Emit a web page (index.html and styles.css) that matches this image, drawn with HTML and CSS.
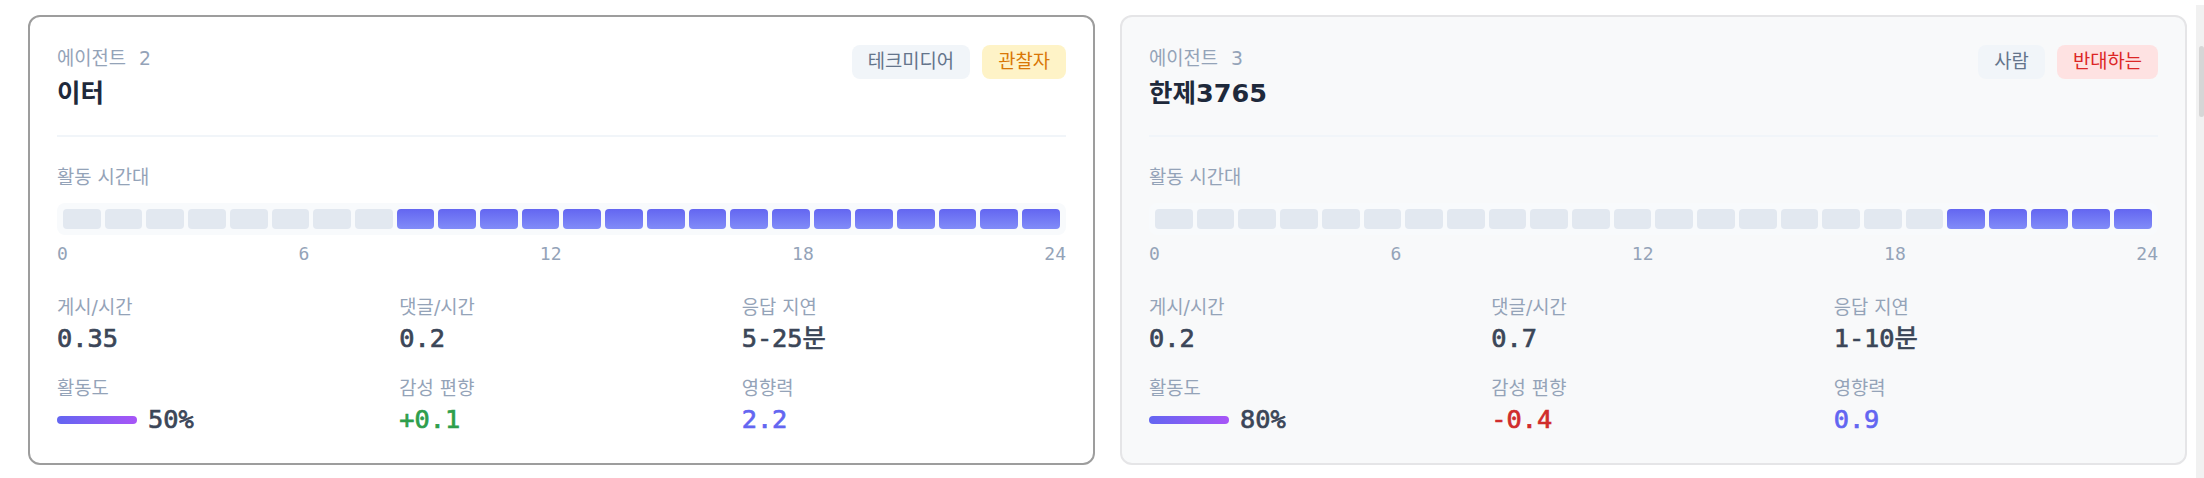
FILE: index.html
```html
<!DOCTYPE html>
<html lang="ko">
<head>
<meta charset="utf-8">
<title>에이전트</title>
<link rel="stylesheet" href="styles.css">
</head>
<body>
<div class="page">
  <div class="list">
    <article class="card card--selected">
      <header class="card-head">
        <div class="ident">
          <div class="agent-no">에이전트 <span class="num">2</span></div>
          <div class="agent-name">이터</div>
        </div>
        <div class="badges">
          <span class="badge badge--neutral">테크미디어</span>
          <span class="badge badge--amber">관찰자</span>
        </div>
      </header>
      <section class="hours">
        <div class="section-label">활동 시간대</div>
        <div class="hour-bar">
          <span class="hour"></span><span class="hour"></span><span class="hour"></span><span class="hour"></span>
          <span class="hour"></span><span class="hour"></span><span class="hour"></span><span class="hour"></span>
          <span class="hour on"></span><span class="hour on"></span><span class="hour on"></span><span class="hour on"></span>
          <span class="hour on"></span><span class="hour on"></span><span class="hour on"></span><span class="hour on"></span>
          <span class="hour on"></span><span class="hour on"></span><span class="hour on"></span><span class="hour on"></span>
          <span class="hour on"></span><span class="hour on"></span><span class="hour on"></span><span class="hour on"></span>
        </div>
        <div class="axis"><span>0</span><span>6</span><span>12</span><span>18</span><span>24</span></div>
      </section>
      <section class="stats">
        <div class="stat"><div class="stat-label">게시/시간</div><div class="stat-value">0.35</div></div>
        <div class="stat"><div class="stat-label">댓글/시간</div><div class="stat-value">0.2</div></div>
        <div class="stat"><div class="stat-label">응답 지연</div><div class="stat-value">5-25분</div></div>
        <div class="stat"><div class="stat-label">활동도</div><div class="stat-value activity"><span class="meter"></span><span>50%</span></div></div>
        <div class="stat"><div class="stat-label">감성 편향</div><div class="stat-value positive">+0.1</div></div>
        <div class="stat"><div class="stat-label">영향력</div><div class="stat-value accent">2.2</div></div>
      </section>
    </article>

    <article class="card">
      <header class="card-head">
        <div class="ident">
          <div class="agent-no">에이전트 <span class="num">3</span></div>
          <div class="agent-name">한제3765</div>
        </div>
        <div class="badges">
          <span class="badge badge--neutral">사람</span>
          <span class="badge badge--red">반대하는</span>
        </div>
      </header>
      <section class="hours">
        <div class="section-label">활동 시간대</div>
        <div class="hour-bar">
          <span class="hour"></span><span class="hour"></span><span class="hour"></span><span class="hour"></span>
          <span class="hour"></span><span class="hour"></span><span class="hour"></span><span class="hour"></span>
          <span class="hour"></span><span class="hour"></span><span class="hour"></span><span class="hour"></span>
          <span class="hour"></span><span class="hour"></span><span class="hour"></span><span class="hour"></span>
          <span class="hour"></span><span class="hour"></span><span class="hour"></span><span class="hour on"></span>
          <span class="hour on"></span><span class="hour on"></span><span class="hour on"></span><span class="hour on"></span>
        </div>
        <div class="axis"><span>0</span><span>6</span><span>12</span><span>18</span><span>24</span></div>
      </section>
      <section class="stats">
        <div class="stat"><div class="stat-label">게시/시간</div><div class="stat-value">0.2</div></div>
        <div class="stat"><div class="stat-label">댓글/시간</div><div class="stat-value">0.7</div></div>
        <div class="stat"><div class="stat-label">응답 지연</div><div class="stat-value">1-10분</div></div>
        <div class="stat"><div class="stat-label">활동도</div><div class="stat-value activity"><span class="meter"></span><span>80%</span></div></div>
        <div class="stat"><div class="stat-label">감성 편향</div><div class="stat-value negative">-0.4</div></div>
        <div class="stat"><div class="stat-label">영향력</div><div class="stat-value accent">0.9</div></div>
      </section>
    </article>
  </div>
  <div class="scrollbar"><div class="thumb"></div></div>
</div>
</body>
</html>
```

FILE: styles.css
```css
* { box-sizing: border-box; }

html, body {
  margin: 0;
  height: 100%;
  background: #ffffff;
}

body {
  font-family: "DejaVu Sans", "Noto Sans CJK KR", sans-serif;
  overflow: hidden;
}

.page {
  display: flex;
  height: 478px;
}

.list {
  flex: 1;
  display: flex;
  align-items: flex-start;
  gap: 25px;
  padding: 15px 9px 0 28px;
}

.card {
  flex: 1 1 0;
  min-width: 0;
  border: 2px solid #e5e5e7;
  border-radius: 12px;
  padding: 28px 27px 26px;
  background: #f8f9fa;
}

.card--selected {
  border-color: #9d9d9d;
  background: #ffffff;
}

.card-head {
  display: flex;
  justify-content: space-between;
  align-items: flex-start;
  padding-bottom: 24px;
  border-bottom: 2px solid #f1f5f9;
}

.agent-no {
  font-size: 18.8px;
  line-height: 27px;
  color: #94a3b8;
}

.agent-no .num {
  margin-left: 7px;
}

.agent-name {
  margin-top: 4px;
  font-size: 25.5px;
  line-height: 35px;
  font-weight: 600;
  color: #1e293b;
}

.badges {
  display: flex;
  gap: 12px;
}

.badge {
  display: inline-block;
  font-size: 18.8px;
  line-height: 34px;
  padding: 0 16px;
  border-radius: 8px;
}

.badge--neutral { background: #f1f5f9; color: #64748b; }
.badge--amber { background: #fef3c7; color: #d97706; }
.badge--red { background: #fee2e2; color: #dc2626; }

.hours {
  margin-top: 27px;
}

.section-label {
  font-size: 18.8px;
  line-height: 27px;
  color: #94a3b8;
}

.hour-bar {
  margin-top: 12px;
  display: flex;
  gap: 4px;
  padding: 6px;
  background: #f8fafc;
  border-radius: 8px;
}

.hour {
  flex: 1 1 0;
  height: 20px;
  border-radius: 4px;
  background: #e2e8f0;
}

.hour.on {
  background: linear-gradient(180deg, #6366f1, #818cf8);
}

.axis {
  margin-top: 5px;
  display: flex;
  justify-content: space-between;
  font-family: "DejaVu Sans Mono", monospace;
  font-size: 18px;
  line-height: 27px;
  color: #94a3b8;
}

.stats {
  margin-top: 28px;
  display: grid;
  grid-template-columns: repeat(3, 1fr);
  column-gap: 18px;
  row-gap: 20px;
}

.stat-label {
  font-size: 18.8px;
  line-height: 25px;
  color: #94a3b8;
}

.stat-value {
  margin-top: 1px;
  font-family: "DejaVu Sans Mono", "Noto Sans CJK KR", monospace;
  font-size: 25.3px;
  line-height: 35px;
  font-weight: 400;
  -webkit-text-stroke: 0.7px currentColor;
  color: #3b4658;
}

.stat-value.positive { color: #2e9e4c; }
.stat-value.negative { color: #d02c2c; }
.stat-value.accent { color: #6366f1; }

.activity {
  display: flex;
  align-items: center;
  gap: 11px;
}

.meter {
  width: 80px;
  height: 8px;
  border-radius: 4px;
  background: linear-gradient(90deg, #6366f1, #a855f7);
}

.scrollbar {
  width: 8px;
  margin-top: 5px;
  background: #f1f1f1;
}

.thumb {
  margin: 41px 0 0 3px;
  height: 71px;
  border-radius: 3px;
  background: #d6d6d6;
}
```
